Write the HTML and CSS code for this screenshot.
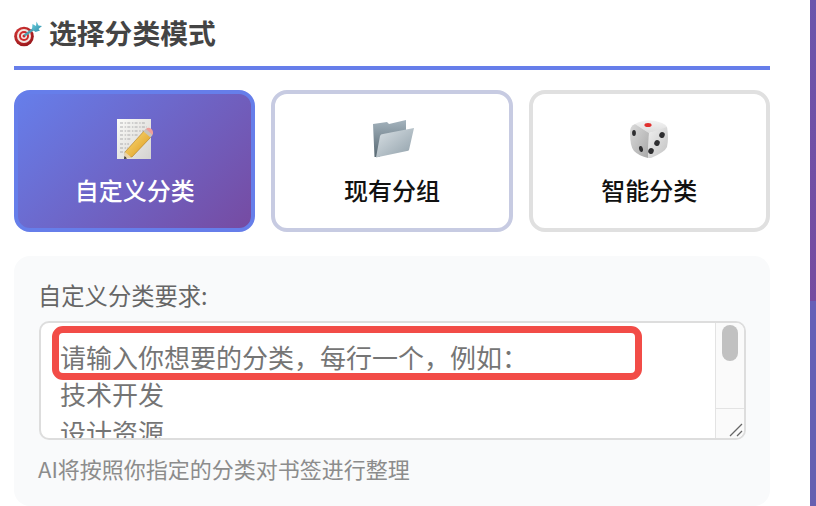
FILE: index.html
```html
<!DOCTYPE html>
<html lang="zh-CN">
<head>
<meta charset="utf-8">
<title>选择分类模式</title>
<link rel="stylesheet" href="styles.css">
</head>
<body>
<div class="page">
  <main class="main">
    <h2 class="heading">
      <svg class="heading-icon" viewBox="0 0 28 26" width="28" height="26">
        <defs>
          <radialGradient id="tg" cx="0.4" cy="0.35" r="0.75"><stop offset="0" stop-color="#e8403e"/><stop offset="1" stop-color="#8e1116"/></radialGradient>
          <linearGradient id="fl" x1="0" y1="0" x2="1" y2="1"><stop offset="0" stop-color="#6fd0df"/><stop offset="1" stop-color="#2c8ea8"/></linearGradient>
        </defs>
        <ellipse cx="10" cy="15.5" rx="9.8" ry="9.8" fill="url(#tg)"/>
        <ellipse cx="10" cy="15" rx="7" ry="7" fill="#f3e6e2"/>
        <ellipse cx="10" cy="15" rx="5" ry="5" fill="#cf2a2c"/>
        <ellipse cx="10" cy="15" rx="3" ry="3" fill="#f6ecea"/>
        <circle cx="10" cy="15" r="1.5" fill="#c6262a"/>
        <path d="M10.5 14.5 L21 7" stroke="#4f9fb0" stroke-width="2.4"/>
        <path d="M18 8.5 L18.5 3 L22 5 L22.5 0.5 L24.5 4.5 L28 5 L24.5 8 L26 9.5 L21.5 11 Z" fill="url(#fl)"/>
      </svg>
      <span>选择分类模式</span>
    </h2>

    <div class="modes">
      <div class="mode mode-active">
        <svg class="mode-icon" viewBox="0 0 36 40" width="36" height="40">
          <defs>
            <linearGradient id="pp" x1="0" y1="0" x2="1" y2="1"><stop offset="0" stop-color="#fbfbf8"/><stop offset="1" stop-color="#d4d3d0"/></linearGradient>
            <linearGradient id="pen" x1="0" y1="0" x2="1" y2="1"><stop offset="0" stop-color="#fde083"/><stop offset="1" stop-color="#d9930f"/></linearGradient>
          </defs>
          <rect x="0" y="0" width="34" height="40" fill="url(#pp)"/>
          <g stroke="#858588" stroke-width="0.6" stroke-dasharray="3 1.6 1.5 1.2" fill="none">
            <path d="M3 4H28M3 8H30M3 12H27M3 16H22M3 20H14M3 25H12M3 29H11M3 33H8"/>
          </g>
          <path d="M10 38 L8.5 39.5 L8 33 L27 12 L34 18 L15 38 Z" fill="url(#pen)" stroke="#a26c0c" stroke-width="0.5"/>
          <path d="M8 33 L7 40 L14.5 38.5 Z" fill="#e9d2a8"/>
          <path d="M7.6 37 L7 40 L10 39.4 Z" fill="#333"/>
          <path d="M27 12 L30 9 Q32 8 34.5 10 Q37 13 36 15 L33.6 18 Z" fill="#ee9f9a"/>
          <path d="M26.5 12.5 L29 10 L35.5 16 L33.5 18.5 Z" fill="#c8c4bc"/>
        </svg>
        <span>自定义分类</span>
      </div>
      <div class="mode mode-group">
        <svg class="mode-icon mode-icon-folder" viewBox="0 0 42 38" width="42" height="38">
          <defs>
            <linearGradient id="fb" x1="0" y1="0" x2="0" y2="1"><stop offset="0" stop-color="#a4b3bd"/><stop offset="1" stop-color="#566771"/></linearGradient>
            <linearGradient id="ff" x1="0" y1="0" x2="1" y2="1"><stop offset="0" stop-color="#dbe2e6"/><stop offset="1" stop-color="#8f9fa9"/></linearGradient>
          </defs>
          <path d="M0 4 L14 2 L16 4 L33 0 L33 13 L6 37 L1.5 37 Z" fill="url(#fb)"/>
          <path d="M7 16 Q7.5 14 10 14 L41 8 L36 30 Q35.5 31 34 31 L3 37.5 Z" fill="url(#ff)"/>
        </svg>
        <span>现有分组</span>
      </div>
      <div class="mode mode-smart">
        <svg class="mode-icon" viewBox="0 0 40 38" width="40" height="38">
          <defs>
            <linearGradient id="dt" x1="0" y1="0" x2="0" y2="1"><stop offset="0" stop-color="#f4f4f4"/><stop offset="1" stop-color="#dcdcdc"/></linearGradient>
            <linearGradient id="dl" x1="0" y1="0" x2="1" y2="1"><stop offset="0" stop-color="#dadada"/><stop offset="1" stop-color="#a8a8a8"/></linearGradient>
            <linearGradient id="dr" x1="0" y1="0" x2="1" y2="1"><stop offset="0" stop-color="#f0f0f0"/><stop offset="1" stop-color="#c2c2c2"/></linearGradient>
          </defs>
          <path d="M6 4 Q19 -3 33 3 Q39 6 38 9 L20 13 Z" fill="url(#dt)"/>
          <path d="M1 12 Q1 6 6 4 L20 13 L19 38 Q10 36 5 31 Q1 27 1 12 Z" fill="url(#dl)"/>
          <path d="M20 13 L38 7 Q40 18 38 27 Q36 32 22 38 L19 38 Z" fill="url(#dr)"/>
          <ellipse cx="19" cy="5" rx="3.6" ry="2" fill="#e0302e"/>
          <ellipse cx="5" cy="13" rx="1.9" ry="3" fill="#2e2e30"/>
          <ellipse cx="12" cy="29" rx="1.9" ry="3" fill="#2e2e30" transform="rotate(-15 12 29)"/>
          <ellipse cx="33" cy="15" rx="2.7" ry="3" fill="#2e2e30" transform="rotate(25 33 15)"/>
          <ellipse cx="28" cy="23" rx="2.7" ry="3" fill="#2e2e30" transform="rotate(25 28 23)"/>
          <ellipse cx="22" cy="31" rx="2.7" ry="3" fill="#2e2e30" transform="rotate(25 22 31)"/>
        </svg>
        <span>智能分类</span>
      </div>
    </div>

    <section class="panel">
      <div class="label">自定义分类要求:</div>
      <div class="field">
        <div class="field-text">请输入你想要的分类，每行一个，例如：<br>技术开发<br>设计资源</div>
        <div class="scroll">
          <div class="scroll-track"><div class="scroll-thumb"></div></div>
          <div class="scroll-corner">
            <svg viewBox="0 0 14 14" width="14" height="14"><path d="M1 13 L13 1 M8 13 L13 8" stroke="#666" stroke-width="1.3" fill="none"/></svg>
          </div>
        </div>
        <div class="annotation"></div>
      </div>
      <div class="hint">AI将按照你指定的分类对书签进行整理</div>
    </section>
  </main>
  <div class="strip">
    <div class="strip-top"></div>
    <div class="strip-bottom"></div>
  </div>
</div>
</body>
</html>
```
FILE: styles.css
```css
* { box-sizing: border-box; }
html, body { margin: 0; height: 506px; overflow: hidden; background: #fff; }
body { font-family: "Noto Sans CJK SC", "Liberation Sans", sans-serif; }

.page { display: flex; height: 506px; padding-left: 14px; }
.main { width: 756px; flex: none; }

.heading {
  display: flex;
  align-items: center;
  gap: 7px;
  height: 70px;
  margin: 0;
  padding-bottom: 1px;
  border-bottom: 4px solid #667eea;
  font-size: 27.8px;
  font-weight: 700;
  line-height: 1;
  color: #444;
}
.heading-icon { flex: none; margin-top: 3px; }

.modes {
  display: grid;
  grid-template-columns: repeat(3, 1fr);
  gap: 16px;
  margin-top: 20px;
}
.mode {
  height: 142px;
  padding-top: 25px;
  display: flex;
  flex-direction: column;
  align-items: center;
  border: 4px solid #e0e0e0;
  border-radius: 16px;
  background: #fff;
  color: #111;
  font-size: 24px;
  font-weight: 500;
  line-height: 34px;
}
.mode-icon { flex: none; height: 40px; }
.mode-icon-folder { transform: translateX(2px); }
.mode span { margin-top: 14px; }
.mode-active {
  border-color: #667eea;
  background: linear-gradient(135deg, #667eea, #764ba2);
  color: #fff;
}
.mode-group { border-color: #c7cbe2; }

.panel {
  margin-top: 24px;
  height: 250px;
  padding: 24px 25px 0;
  background: #f9fafb;
  border-radius: 16px;
}
.label {
  margin-left: -1px;
  font-size: 23.3px;
  line-height: 31px;
  color: #666;
}
.field {
  position: relative;
  display: flex;
  width: 707px;
  height: 119px;
  margin-top: 10px;
  background: #fff;
  border: 2px solid #ddd;
  border-radius: 10px;
  overflow: hidden;
}
.field-text {
  flex: 1;
  padding: 15px 0 0 19px;
  font-size: 26px;
  line-height: 37.4px;
  color: #757575;
  overflow: hidden;
}
.scroll {
  flex: none;
  width: 29px;
  display: flex;
  flex-direction: column;
  background: #fafafa;
  border-left: 1px solid #e3e3e3;
}
.scroll-track { flex: 1; padding: 2px 6px 0; }
.scroll-thumb { width: 16px; height: 36px; border-radius: 8px; background: #c1c1c1; }
.scroll-corner {
  height: 30px;
  display: flex;
  align-items: flex-end;
  justify-content: flex-end;
  padding: 0 1px 1px 0;
  border-top: 1px solid #e3e3e3;
}
.annotation {
  position: absolute;
  left: 11px;
  top: 3px;
  width: 590px;
  height: 54px;
  border: 7px solid #f24c47;
  border-radius: 11px;
}
.hint {
  margin-top: 11px;
  margin-left: -1px;
  font-size: 22px;
  line-height: 34px;
  color: #8c8c8c;
}

.strip {
  flex: none;
  width: 6px;
  margin-left: 40px;
  display: flex;
  flex-direction: column;
}
.strip-top { height: 301px; background: linear-gradient(#6b55ac, #764ba0); }
.strip-bottom { flex: 1; background: linear-gradient(#6660b8, #6660b0); }
```
